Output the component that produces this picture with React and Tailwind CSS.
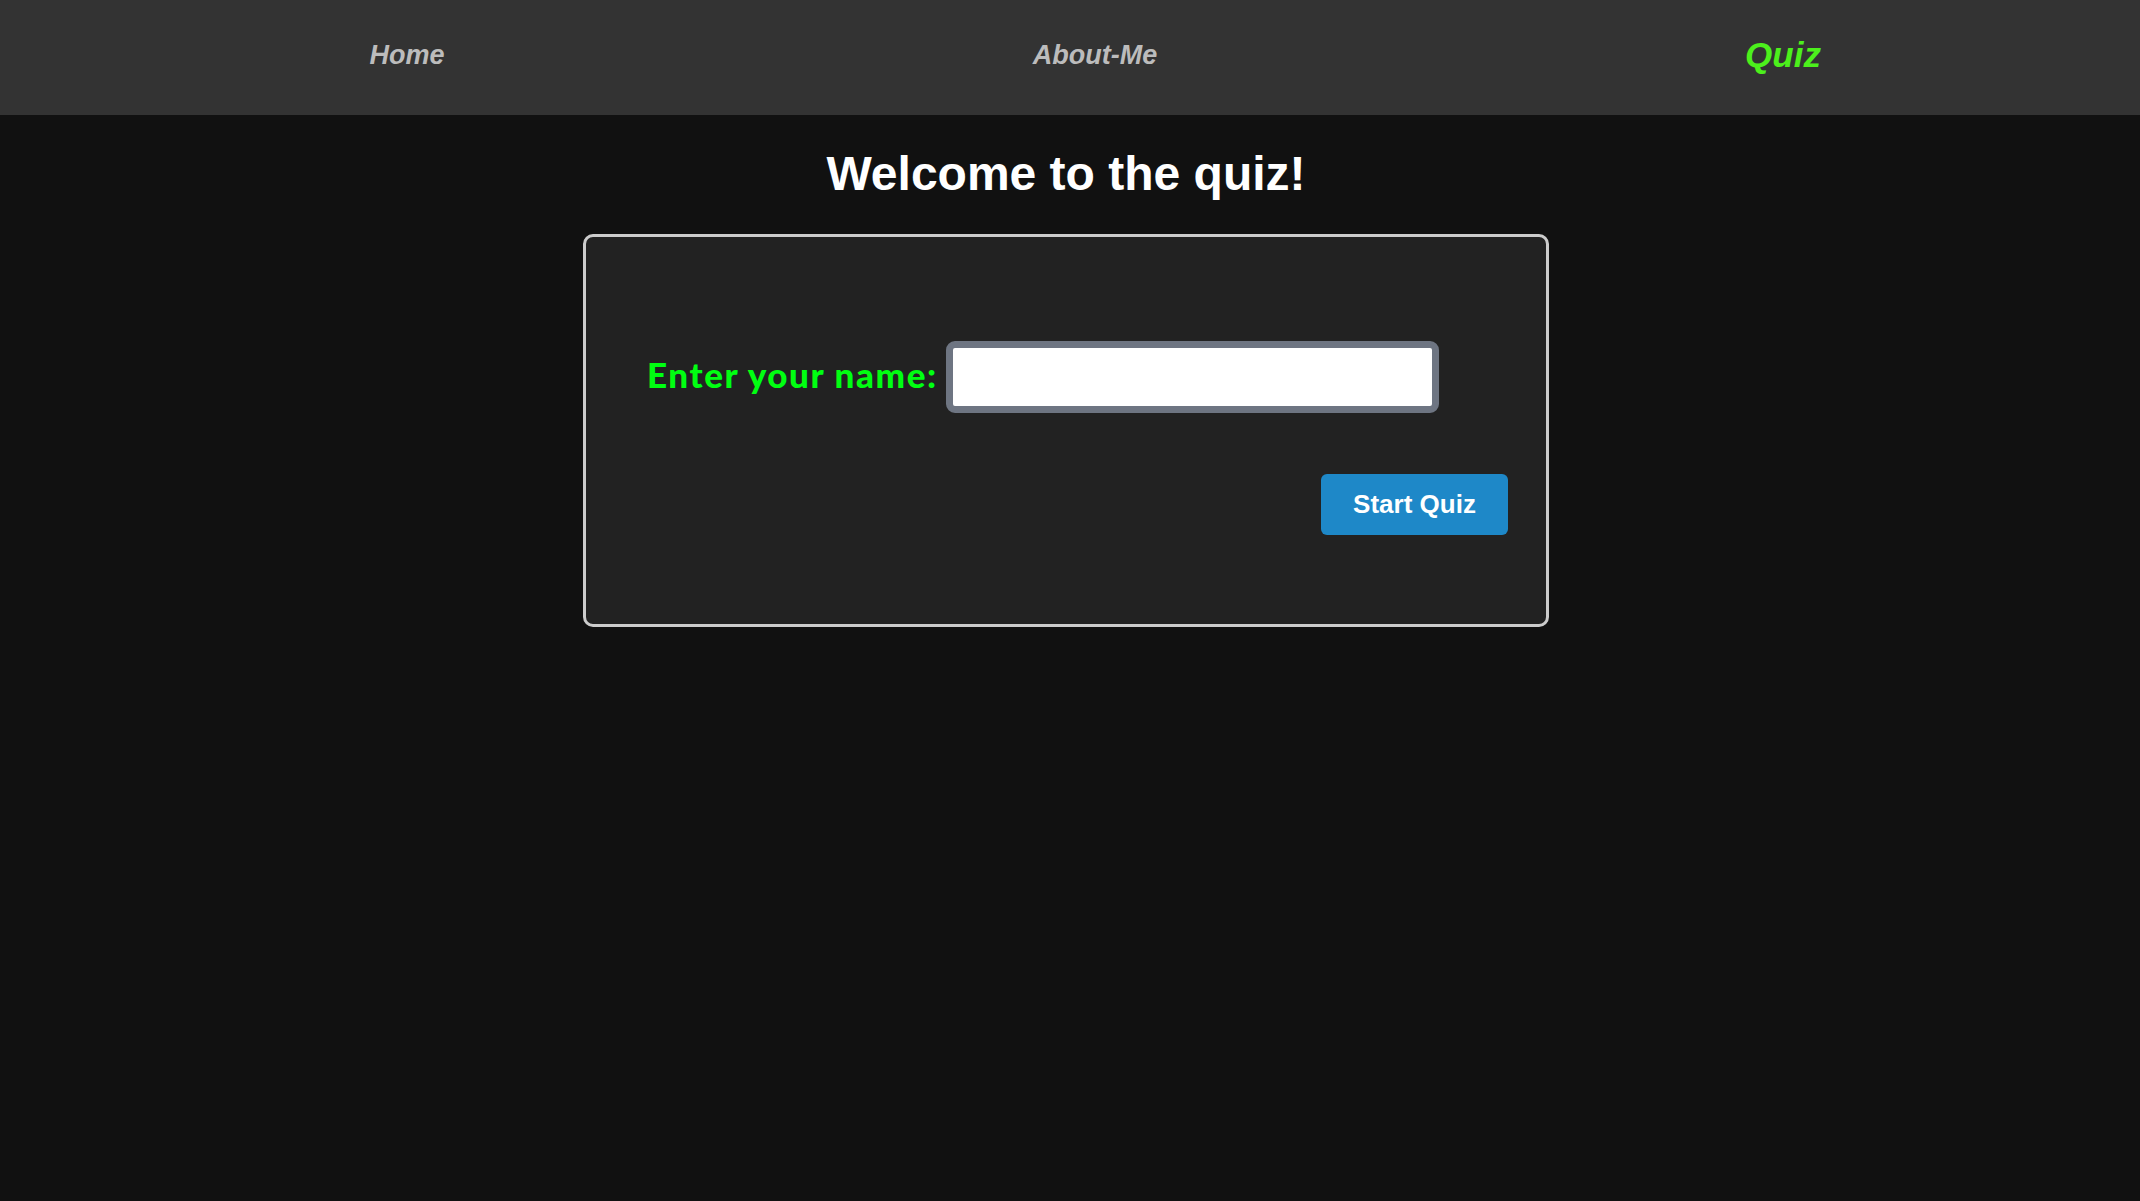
export default function App() {
  return (
    <div className="min-h-[1201px] w-full bg-[#111111] font-['Liberation_Sans',Arial,sans-serif]">
      <nav className="h-[115px] bg-[#333333] pl-[63px] pb-[5px]">
        <div className="grid h-full w-[2064px] grid-cols-3 items-center">
          <div className="flex justify-center">
            <a className="text-[27px] font-bold italic text-[#bcbcbc]">Home</a>
          </div>
          <div className="flex justify-center">
            <a className="text-[27px] font-bold italic text-[#bcbcbc]">About-Me</a>
          </div>
          <div className="flex justify-center">
            <a className="text-[35px] font-bold italic text-[#4cf01c]">Quiz</a>
          </div>
        </div>
      </nav>
      <main className="flex flex-col items-center pr-[8px]">
        <h1 className="mt-[31px] text-[48px] font-bold leading-[55px] text-white">Welcome to the quiz!</h1>
        <div className="mt-[33px] w-[966px] rounded-[10px] border-[3px] border-[#cccccc] bg-[#222222] pt-[104px] pb-[89px]">
          <div className="flex h-[72px] items-center gap-[8px] pl-[61px]">
            <label className="mb-[5px] font-['Lato',sans-serif] text-[35px] font-black tracking-[1.6px] text-[#00ff11]">Enter your name:</label>
            <input type="text" className="h-[72px] w-[493px] rounded-[9px] border-[7px] border-[#6e7582] bg-white outline-none" />
          </div>
          <div className="mt-[61px] flex justify-end pr-[38px]">
            <button className="flex h-[61px] w-[187px] items-center justify-center rounded-[6px] bg-[#1e88c8] text-[26px] font-bold text-white">
              Start Quiz
            </button>
          </div>
        </div>
      </main>
    </div>
  );
}
